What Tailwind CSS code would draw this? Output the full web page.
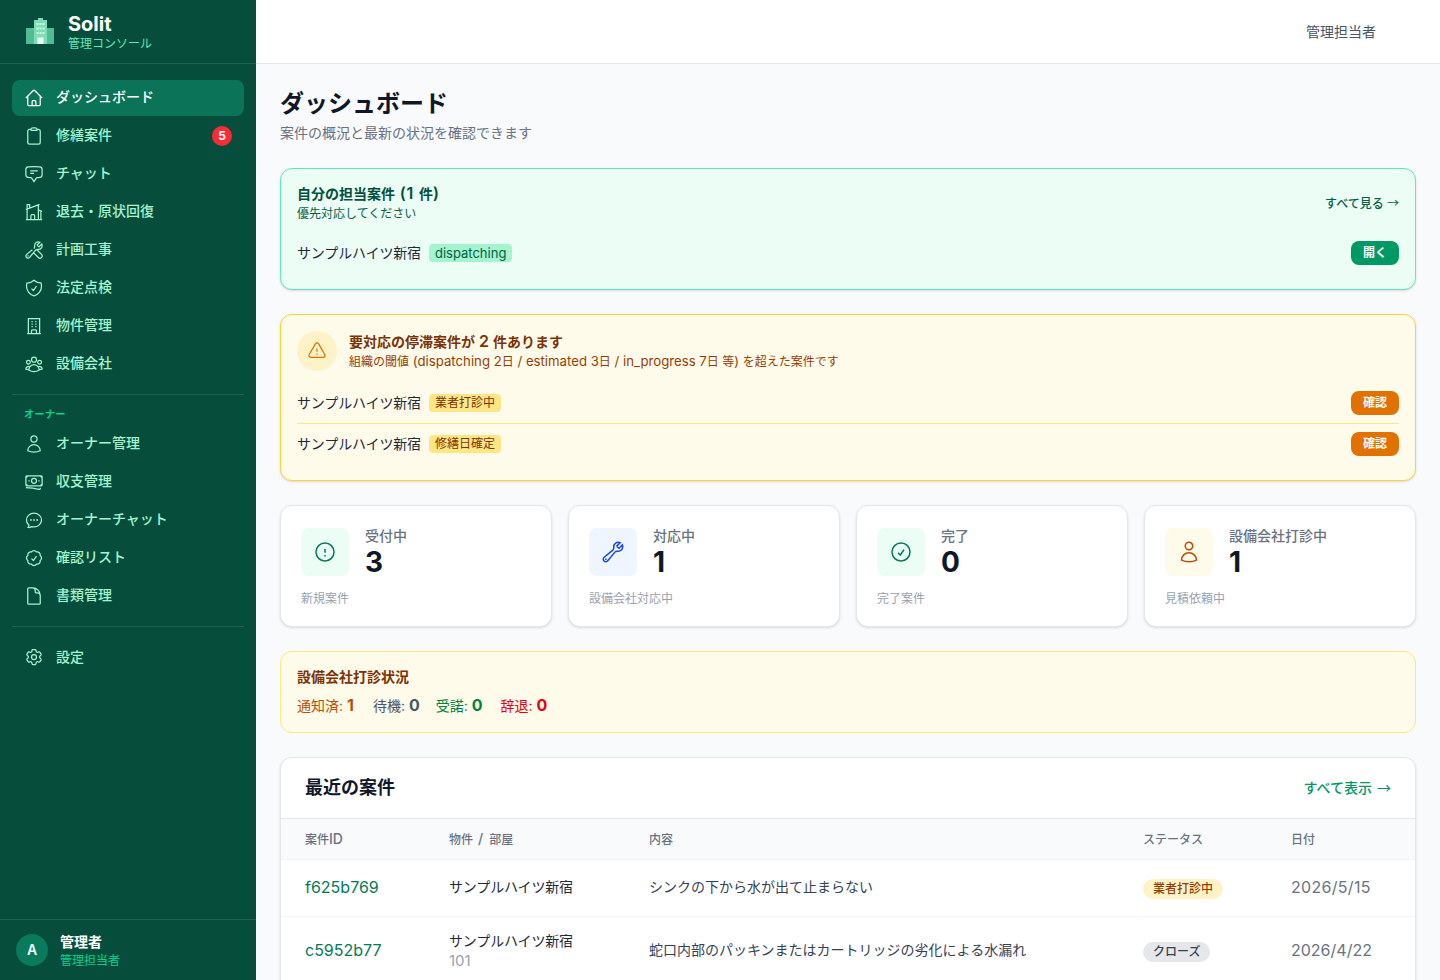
<!DOCTYPE html>
<html lang="ja">
<head>
<meta charset="utf-8">
<title>Solit</title>
<script src="https://cdn.jsdelivr.net/npm/@tailwindcss/browser@4"></script>
</head>
<body class="m-0 font-['Inter','Noto_Sans_CJK_JP',sans-serif]">
<svg class="hidden" xmlns="http://www.w3.org/2000/svg">
<symbol id="i-home" viewBox="0 0 24 24"><path d="M2.25 12l8.954-8.955c.44-.439 1.152-.439 1.591 0L21.75 12M4.5 9.75v10.125c0 .621.504 1.125 1.125 1.125H9.75v-4.875c0-.621.504-1.125 1.125-1.125h2.25c.621 0 1.125.504 1.125 1.125V21h4.125c.621 0 1.125-.504 1.125-1.125V9.75M8.25 21h8.25"/></symbol>
<symbol id="i-clip" viewBox="0 0 24 24"><path d="M15.666 3.888A2.25 2.25 0 0013.5 2.25h-3c-1.03 0-1.9.693-2.166 1.638m7.332 0c.055.194.084.4.084.612v0a.75.75 0 01-.75.75H9a.75.75 0 01-.75-.75v0c0-.212.03-.418.084-.612m7.332 0c.646.049 1.288.11 1.927.184 1.1.128 1.907 1.077 1.907 2.185V19.5a2.25 2.25 0 01-2.25 2.25H6.75A2.25 2.25 0 014.5 19.5V6.257c0-1.108.806-2.057 1.907-2.185a48.208 48.208 0 011.927-.184"/></symbol>
<symbol id="i-chat" viewBox="0 0 24 24"><path d="M7.5 8.25h9m-9 3H12m-9.75 1.51c0 1.6 1.123 2.994 2.707 3.227 1.129.166 2.27.293 3.423.379.35.026.67.21.865.501L12 21l2.755-4.133a1.14 1.14 0 01.865-.501 48.172 48.172 0 003.423-.379c1.584-.233 2.707-1.626 2.707-3.228V6.741c0-1.602-1.123-2.995-2.707-3.228A48.394 48.394 0 0012 3c-2.392 0-4.744.175-7.043.513C3.373 3.746 2.25 5.14 2.25 6.741v6.018z"/></symbol>
<symbol id="i-modern" viewBox="0 0 24 24"><path d="M8.25 21v-4.875c0-.621.504-1.125 1.125-1.125h2.25c.621 0 1.125.504 1.125 1.125V21m0 0h4.5V3.545M12.75 21h7.5V10.75M2.25 21h1.5m18 0h-18M2.25 9l4.5-1.636M18.75 3l-1.5.545m0 6.205l3 1m1.5.5l-1.5-.5M6.75 7.364V3h-3v18m3-13.636l10.5-3.819"/></symbol>
<symbol id="i-tools" viewBox="0 0 24 24"><path d="M11.42 15.17L17.25 21A2.652 2.652 0 0021 17.25l-5.877-5.877M11.42 15.17l2.496-3.03c.317-.384.74-.626 1.208-.766M11.42 15.17l-4.655 5.653a2.548 2.548 0 11-3.586-3.586l6.837-5.63m5.108-.233c.55-.164 1.163-.188 1.743-.14a4.5 4.5 0 004.486-6.336l-3.276 3.277a3.004 3.004 0 01-2.25-2.25l3.276-3.276a4.5 4.5 0 00-6.336 4.486c.091 1.076-.071 2.264-.904 2.95l-.102.085M4.867 19.125h.008v.008h-.008v-.008z"/></symbol>
<symbol id="i-shield" viewBox="0 0 24 24"><path d="M9 12.75L11.25 15 15 9.75m-3-7.036A11.959 11.959 0 013.598 6 11.99 11.99 0 003 9.749c0 5.592 3.824 10.29 9 11.623 5.176-1.332 9-6.03 9-11.622 0-1.31-.21-2.571-.598-3.751h-.152c-3.196 0-6.1-1.248-8.25-3.285z"/></symbol>
<symbol id="i-office" viewBox="0 0 24 24"><path d="M3.75 21h16.5M4.5 3h15M5.25 3v18m13.5-18v18M9 6.75h1.5m-1.5 3h1.5m-1.5 3h1.5m3-6H15m-1.5 3H15m-1.5 3H15M9 21v-3.375c0-.621.504-1.125 1.125-1.125h3.75c.621 0 1.125.504 1.125 1.125V21"/></symbol>
<symbol id="i-group" viewBox="0 0 24 24"><path d="M18 18.72a9.094 9.094 0 003.741-.479 3 3 0 00-4.682-2.72m.94 3.198l.001.031c0 .225-.012.447-.037.666A11.944 11.944 0 0112 21c-2.17 0-4.207-.576-5.963-1.584A6.062 6.062 0 016 18.719m12 0a5.971 5.971 0 00-.941-3.197m0 0A5.995 5.995 0 0012 12.75a5.995 5.995 0 00-5.058 2.772m0 0a3 3 0 00-4.681 2.72 8.986 8.986 0 003.74.477m.94-3.197a5.971 5.971 0 00-.94 3.197M15 6.75a3 3 0 11-6 0 3 3 0 016 0zm6 3a2.25 2.25 0 11-4.5 0 2.25 2.25 0 014.5 0zm-13.5 0a2.25 2.25 0 11-4.5 0 2.25 2.25 0 014.5 0z"/></symbol>
<symbol id="i-user" viewBox="0 0 24 24"><path d="M15.75 6a3.75 3.75 0 11-7.5 0 3.75 3.75 0 017.5 0zM4.501 20.118a7.5 7.5 0 0114.998 0A17.933 17.933 0 0112 21.75c-2.676 0-5.216-.584-7.499-1.632z"/></symbol>
<symbol id="i-notes" viewBox="0 0 24 24"><path d="M2.25 18.75a60.07 60.07 0 0115.797 2.101c.727.198 1.453-.342 1.453-1.096V18.75M3.75 4.5v.75A.75.75 0 013 6h-.75m0 0v-.375c0-.621.504-1.125 1.125-1.125H20.25M2.25 6v9m18-10.5v.75c0 .414.336.75.75.75h.75m-1.5-1.5h.375c.621 0 1.125.504 1.125 1.125v9.75c0 .621-.504 1.125-1.125 1.125h-.375m1.5-1.5H21a.75.75 0 00-.75.75v.75m0 0H3.75m0 0h-.375a1.125 1.125 0 01-1.125-1.125V15m1.5 1.5v-.75A.75.75 0 003 15h-.75M15 10.5a3 3 0 11-6 0 3 3 0 016 0zm3 0h.008v.008H18V10.5zm-12 0h.008v.008H6V10.5z"/></symbol>
<symbol id="i-oval" viewBox="0 0 24 24"><path d="M8.625 12a.375.375 0 11-.75 0 .375.375 0 01.75 0zm0 0H8.25m4.125 0a.375.375 0 11-.75 0 .375.375 0 01.75 0zm0 0H12m4.125 0a.375.375 0 11-.75 0 .375.375 0 01.75 0zm0 0h-.375M21 12c0 4.556-4.03 8.25-9 8.25a9.764 9.764 0 01-2.555-.337A5.972 5.972 0 015.41 20.97a5.969 5.969 0 01-.474-.065 4.48 4.48 0 00.978-2.025c.09-.457-.133-.901-.467-1.226C3.93 16.178 3 14.189 3 12c0-4.556 4.03-8.25 9-8.25s9 3.694 9 8.25z"/></symbol>
<symbol id="i-badge" viewBox="0 0 24 24"><path d="M9 12.75L11.25 15 15 9.75M21 12c0 1.268-.63 2.39-1.593 3.068a3.745 3.745 0 01-1.043 3.296 3.745 3.745 0 01-3.296 1.043A3.745 3.745 0 0112 21c-1.268 0-2.39-.63-3.068-1.593a3.746 3.746 0 01-3.296-1.043 3.745 3.745 0 01-1.043-3.296A3.745 3.745 0 013 12c0-1.268.63-2.39 1.593-3.068a3.745 3.745 0 011.043-3.296 3.746 3.746 0 013.296-1.043A3.746 3.746 0 0112 3c1.268 0 2.39.63 3.068 1.593a3.746 3.746 0 013.296 1.043 3.746 3.746 0 011.043 3.296A3.745 3.745 0 0121 12z"/></symbol>
<symbol id="i-doc" viewBox="0 0 24 24"><path d="M19.5 14.25v-2.625a3.375 3.375 0 00-3.375-3.375h-1.5A1.125 1.125 0 0113.5 7.125v-1.5a3.375 3.375 0 00-3.375-3.375H8.25m2.25 0H5.625c-.621 0-1.125.504-1.125 1.125v17.25c0 .621.504 1.125 1.125 1.125h12.75c.621 0 1.125-.504 1.125-1.125V11.25a9 9 0 00-9-9z"/></symbol>
<symbol id="i-cog" viewBox="0 0 24 24"><path d="M9.594 3.94c.09-.542.56-.94 1.11-.94h2.593c.55 0 1.02.398 1.11.94l.213 1.281c.063.374.313.686.645.87.074.04.147.083.22.127.324.196.72.257 1.075.124l1.217-.456a1.125 1.125 0 011.37.49l1.296 2.247a1.125 1.125 0 01-.26 1.431l-1.003.827c-.293.24-.438.613-.431.992a6.759 6.759 0 010 .255c-.007.378.138.75.43.99l1.005.828c.424.35.534.954.26 1.43l-1.298 2.247a1.125 1.125 0 01-1.369.491l-1.217-.456c-.355-.133-.75-.072-1.076.124a6.57 6.57 0 01-.22.128c-.331.183-.581.495-.644.869l-.213 1.28c-.09.543-.56.941-1.11.941h-2.594c-.55 0-1.02-.398-1.11-.94l-.213-1.281c-.062-.374-.312-.686-.644-.87a6.52 6.52 0 01-.22-.127c-.325-.196-.72-.257-1.076-.124l-1.217.456a1.125 1.125 0 01-1.369-.49l-1.297-2.247a1.125 1.125 0 01.26-1.431l1.004-.827c.292-.24.437-.613.43-.992a6.932 6.932 0 010-.255c.007-.378-.138-.75-.43-.99l-1.004-.828a1.125 1.125 0 01-.26-1.43l1.297-2.247a1.125 1.125 0 011.37-.491l1.216.456c.356.133.751.072 1.076-.124.072-.044.146-.087.22-.128.332-.183.582-.495.644-.869l.214-1.281z"/><path d="M15 12a3 3 0 11-6 0 3 3 0 016 0z"/></symbol>
<symbol id="i-warn" viewBox="0 0 24 24"><path d="M12 9v3.75m-9.303 3.376c-.866 1.5.217 3.374 1.948 3.374h14.71c1.73 0 2.813-1.874 1.948-3.374L13.949 3.378c-.866-1.5-3.032-1.5-3.898 0L2.697 16.126zM12 15.75h.007v.008H12v-.008z"/></symbol>
<symbol id="i-excl" viewBox="0 0 24 24"><path d="M12 9v3.75m9-.75a9 9 0 11-18 0 9 9 0 0118 0zm-9 3.75h.008v.008H12v-.008z"/></symbol>
<symbol id="i-wrench" viewBox="0 0 24 24"><path d="M21.75 6.75a4.5 4.5 0 01-4.884 4.484c-1.076-.091-2.264.071-2.95.904l-7.152 8.684a2.548 2.548 0 11-3.586-3.586l8.684-7.152c.833-.686.995-1.874.904-2.95a4.5 4.5 0 016.336-4.486l-3.276 3.276a3.004 3.004 0 002.25 2.25l3.276-3.276c.256.565.398 1.192.398 1.852z"/><path d="M4.867 19.125h.008v.008h-.008v-.008z"/></symbol>
<symbol id="i-check" viewBox="0 0 24 24"><path d="M9 12.75L11.25 15 15 9.75M21 12a9 9 0 11-18 0 9 9 0 0118 0z"/></symbol>
</svg>
<div class="flex h-[980px] w-[1440px] overflow-hidden bg-gray-50">
  <aside class="flex w-64 shrink-0 flex-col bg-[#064e3b]">
    <div class="flex h-16 shrink-0 items-center gap-3 border-b border-white/10 px-6">
      <svg class="size-8 shrink-0" viewBox="0 0 32 32"><rect x="2" y="12" width="28" height="16" fill="#52bd95"/><rect x="10" y="4" width="13" height="24" fill="#7fdcb8"/><rect x="14" y="2" width="5" height="2" fill="#7fdcb8"/><g fill="#d1fae5"><rect x="12.5" y="7" width="2" height="2"/><rect x="15.5" y="7" width="2" height="2"/><rect x="18.5" y="7" width="2" height="2"/><rect x="12.5" y="11.5" width="2" height="2"/><rect x="15.5" y="11.5" width="2" height="2"/><rect x="18.5" y="11.5" width="2" height="2"/><rect x="12.5" y="16" width="2" height="2"/><rect x="15.5" y="16" width="2" height="2"/><rect x="18.5" y="16" width="2" height="2"/></g><rect x="13.5" y="21.5" width="6" height="6.5" fill="#ecfdf5"/></svg>
      <div>
        <div class="text-xl leading-6 font-bold text-white">Solit</div>
        <div class="text-xs leading-4 text-emerald-300">管理コンソール</div>
      </div>
    </div>
    <nav class="flex flex-1 flex-col px-3 pt-4">
      <div class="flex flex-col gap-0.5">
        <a class="flex h-9 items-center gap-3 rounded-lg bg-[#0a7358] px-3 text-sm font-medium text-white"><svg class="size-5 shrink-0 fill-none stroke-current stroke-[1.5]"><use href="#i-home"/></svg><span class="mb-0.5">ダッシュボード</span></a>
        <a class="flex h-9 items-center gap-3 rounded-lg px-3 text-sm font-medium text-emerald-200"><svg class="size-5 shrink-0 fill-none stroke-current stroke-[1.5]"><use href="#i-clip"/></svg><span class="mb-0.5 flex-1">修繕案件</span><span class="flex size-5 items-center justify-center rounded-full bg-red-500 text-xs font-bold text-white">5</span></a>
        <a class="flex h-9 items-center gap-3 rounded-lg px-3 text-sm font-medium text-emerald-200"><svg class="size-5 shrink-0 fill-none stroke-current stroke-[1.5]"><use href="#i-chat"/></svg><span class="mb-0.5">チャット</span></a>
        <a class="flex h-9 items-center gap-3 rounded-lg px-3 text-sm font-medium text-emerald-200"><svg class="size-5 shrink-0 fill-none stroke-current stroke-[1.5]"><use href="#i-modern"/></svg><span class="mb-0.5">退去・原状回復</span></a>
        <a class="flex h-9 items-center gap-3 rounded-lg px-3 text-sm font-medium text-emerald-200"><svg class="size-5 shrink-0 fill-none stroke-current stroke-[1.5]"><use href="#i-tools"/></svg><span class="mb-0.5">計画工事</span></a>
        <a class="flex h-9 items-center gap-3 rounded-lg px-3 text-sm font-medium text-emerald-200"><svg class="size-5 shrink-0 fill-none stroke-current stroke-[1.5]"><use href="#i-shield"/></svg><span class="mb-0.5">法定点検</span></a>
        <a class="flex h-9 items-center gap-3 rounded-lg px-3 text-sm font-medium text-emerald-200"><svg class="size-5 shrink-0 fill-none stroke-current stroke-[1.5]"><use href="#i-office"/></svg><span class="mb-0.5">物件管理</span></a>
        <a class="flex h-9 items-center gap-3 rounded-lg px-3 text-sm font-medium text-emerald-200"><svg class="size-5 shrink-0 fill-none stroke-current stroke-[1.5]"><use href="#i-group"/></svg><span class="mb-0.5">設備会社</span></a>
      </div>
      <div class="mt-3 mb-[11px] border-t border-white/10"></div>
      <div class="mb-1 h-4 px-3 text-[10px] leading-4 font-semibold tracking-[0.5px] text-emerald-400">オーナー</div>
      <div class="flex flex-col gap-0.5">
        <a class="flex h-9 items-center gap-3 rounded-lg px-3 text-sm font-medium text-emerald-200"><svg class="size-5 shrink-0 fill-none stroke-current stroke-[1.5]"><use href="#i-user"/></svg><span class="mb-0.5">オーナー管理</span></a>
        <a class="flex h-9 items-center gap-3 rounded-lg px-3 text-sm font-medium text-emerald-200"><svg class="size-5 shrink-0 fill-none stroke-current stroke-[1.5]"><use href="#i-notes"/></svg><span class="mb-0.5">収支管理</span></a>
        <a class="flex h-9 items-center gap-3 rounded-lg px-3 text-sm font-medium text-emerald-200"><svg class="size-5 shrink-0 fill-none stroke-current stroke-[1.5]"><use href="#i-oval"/></svg><span class="mb-0.5">オーナーチャット</span></a>
        <a class="flex h-9 items-center gap-3 rounded-lg px-3 text-sm font-medium text-emerald-200"><svg class="size-5 shrink-0 fill-none stroke-current stroke-[1.5]"><use href="#i-badge"/></svg><span class="mb-0.5">確認リスト</span></a>
        <a class="flex h-9 items-center gap-3 rounded-lg px-3 text-sm font-medium text-emerald-200"><svg class="size-5 shrink-0 fill-none stroke-current stroke-[1.5]"><use href="#i-doc"/></svg><span class="mb-0.5">書類管理</span></a>
      </div>
      <div class="my-3 border-t border-white/10"></div>
      <a class="flex h-9 items-center gap-3 rounded-lg px-3 text-sm font-medium text-emerald-200"><svg class="size-5 shrink-0 fill-none stroke-current stroke-[1.5]"><use href="#i-cog"/></svg><span>設定</span></a>
    </nav>
    <div class="flex h-[61px] shrink-0 items-center gap-3 border-t border-white/10 px-4">
      <div class="flex size-8 items-center justify-center rounded-full bg-[#0a7a5c] text-sm font-semibold text-white">A</div>
      <div>
        <div class="text-sm leading-5 font-semibold text-white">管理者</div>
        <div class="mt-px text-xs leading-4 text-emerald-400">管理担当者</div>
      </div>
    </div>
  </aside>
  <div class="flex min-w-0 flex-1 flex-col">
    <header class="flex h-16 shrink-0 items-center justify-end border-b border-gray-200 bg-white pr-16">
      <span class="text-sm text-gray-600">管理担当者</span>
    </header>
    <main class="flex flex-col gap-6 px-6 pt-6">
      <div class="h-14">
        <h1 class="text-2xl leading-8 font-bold text-gray-900">ダッシュボード</h1>
        <p class="mt-[3px] text-sm leading-5 text-gray-500">案件の概況と最新の状況を確認できます</p>
      </div>
      <section class="h-[122px] rounded-xl border border-emerald-300 bg-emerald-50 px-4 pt-4 shadow-sm">
        <div class="flex items-center justify-between">
          <div>
            <div class="-mt-0.5 text-sm leading-5 font-semibold text-emerald-900">自分の担当案件<span class="text-base leading-5 tracking-[0.8px]"> (1 </span>件<span class="text-base leading-5">)</span></div>
            <div class="mt-[2px] text-xs leading-4 text-emerald-800">優先対応してください</div>
          </div>
          <a class="text-xs font-medium text-emerald-800">すべて見る <span class="font-['Noto_Sans_CJK_JP'] font-normal">→</span></a>
        </div>
        <div class="mt-[11px] flex h-[40px] items-center justify-between">
          <div class="flex items-center gap-2">
            <span class="text-sm tracking-[-0.15px] text-gray-800">サンプルハイツ新宿</span>
            <span class="rounded bg-emerald-200 px-1.5 text-[13px] leading-[18px] text-emerald-800">dispatching</span>
          </div>
          <a class="flex h-6 w-12 items-center justify-center rounded-lg bg-emerald-600 text-xs font-semibold text-white">開く</a>
        </div>
      </section>
      <section class="h-[167px] rounded-xl border border-amber-300 bg-amber-50 px-4 pt-4 shadow-sm">
        <div class="flex items-center gap-3">
          <div class="flex size-10 items-center justify-center rounded-full bg-amber-100 text-amber-600"><svg class="size-5 fill-none stroke-current stroke-[1.5]"><use href="#i-warn"/></svg></div>
          <div>
            <div class="-mt-px text-sm leading-5 font-semibold text-amber-900">要対応の停滞案件が<span class="text-base leading-5"> 2 </span>件あります</div>
            <div class="mt-px text-xs leading-4 text-amber-800">組織の閾値<span class="text-[13.2px] leading-4"> (dispatching 2</span>日<span class="text-[13.2px] leading-4"> / estimated 3</span>日<span class="text-[13.2px] leading-4"> / in_progress 7</span>日 等<span class="text-[13.2px] leading-4">) </span>を超えた案件です</div>
          </div>
        </div>
        <div class="mt-3">
          <div class="flex h-[41px] items-center justify-between border-b border-amber-200">
            <div class="flex items-center gap-2">
              <span class="text-sm tracking-[-0.15px] text-gray-800">サンプルハイツ新宿</span>
              <span class="rounded bg-amber-200 px-1.5 text-xs leading-[18px] text-amber-900">業者打診中</span>
            </div>
            <a class="flex h-6 w-12 items-center justify-center rounded-lg bg-amber-600 text-xs font-semibold text-white">確認</a>
          </div>
          <div class="flex h-[40px] items-center justify-between">
            <div class="flex items-center gap-2">
              <span class="text-sm tracking-[-0.15px] text-gray-800">サンプルハイツ新宿</span>
              <span class="rounded bg-amber-200 px-1.5 text-xs leading-[18px] text-amber-900">修繕日確定</span>
            </div>
            <a class="flex h-6 w-12 items-center justify-center rounded-lg bg-amber-600 text-xs font-semibold text-white">確認</a>
          </div>
        </div>
      </section>
      <section class="grid grid-cols-4 gap-4">
        <div class="h-[122px] rounded-xl border border-gray-200 bg-white px-5 pt-[22px] shadow-sm">
          <div class="flex gap-4">
            <div class="flex size-12 items-center justify-center rounded-lg bg-emerald-50 text-emerald-700"><svg class="size-6 fill-none stroke-current stroke-[1.5]"><use href="#i-excl"/></svg></div>
            <div><div class="text-sm leading-4 font-medium text-gray-500">受付中</div><div class="mt-1 text-[28px] leading-7 font-bold text-gray-900">3</div></div>
          </div>
          <div class="mt-[11px] text-xs leading-6 text-gray-400">新規案件</div>
        </div>
        <div class="h-[122px] rounded-xl border border-gray-200 bg-white px-5 pt-[22px] shadow-sm">
          <div class="flex gap-4">
            <div class="flex size-12 items-center justify-center rounded-lg bg-blue-50 text-blue-700"><svg class="size-6 fill-none stroke-current stroke-[1.5]"><use href="#i-wrench"/></svg></div>
            <div><div class="text-sm leading-4 font-medium text-gray-500">対応中</div><div class="mt-1 text-[28px] leading-7 font-bold text-gray-900">1</div></div>
          </div>
          <div class="mt-[11px] text-xs leading-6 text-gray-400">設備会社対応中</div>
        </div>
        <div class="h-[122px] rounded-xl border border-gray-200 bg-white px-5 pt-[22px] shadow-sm">
          <div class="flex gap-4">
            <div class="flex size-12 items-center justify-center rounded-lg bg-emerald-50 text-emerald-700"><svg class="size-6 fill-none stroke-current stroke-[1.5]"><use href="#i-check"/></svg></div>
            <div><div class="text-sm leading-4 font-medium text-gray-500">完了</div><div class="mt-1 text-[28px] leading-7 font-bold text-gray-900">0</div></div>
          </div>
          <div class="mt-[11px] text-xs leading-6 text-gray-400">完了案件</div>
        </div>
        <div class="h-[122px] rounded-xl border border-gray-200 bg-white px-5 pt-[22px] shadow-sm">
          <div class="flex gap-4">
            <div class="flex size-12 items-center justify-center rounded-lg bg-amber-50 text-amber-700"><svg class="size-6 fill-none stroke-current stroke-[1.5]"><use href="#i-user"/></svg></div>
            <div><div class="text-sm leading-4 font-medium text-gray-500">設備会社打診中</div><div class="mt-1 text-[28px] leading-7 font-bold text-gray-900">1</div></div>
          </div>
          <div class="mt-[11px] text-xs leading-6 text-gray-400">見積依頼中</div>
        </div>
      </section>
      <section class="h-[82px] rounded-xl border border-amber-200 bg-amber-50 px-4 pt-[15px]">
        <div class="text-sm leading-5 font-semibold text-amber-900">設備会社打診状況</div>
        <div class="mt-1.5 flex gap-4 text-sm leading-5">
          <span class="mr-[3px] text-amber-700">通知済: <b class="text-base font-bold">1</b></span>
          <span class="text-gray-600">待機: <b class="text-base font-bold">0</b></span>
          <span class="mr-0.5 text-green-700">受諾: <b class="text-base font-bold">0</b></span>
          <span class="text-red-600">辞退: <b class="text-base font-bold">0</b></span>
        </div>
      </section>
      <section class="h-[400px] overflow-hidden rounded-xl border border-gray-200 bg-white shadow-sm">
        <div class="flex h-[61px] items-center justify-between border-b border-gray-200 px-6">
          <h2 class="text-lg font-bold text-gray-900">最近の案件</h2>
          <a class="mb-0.5 text-sm font-medium text-emerald-600"><span class="mr-[5px]">すべて表示</span><span class="font-['Noto_Sans_CJK_JP'] font-normal">→</span></a>
        </div>
        <table class="w-full table-fixed border-collapse">
          <colgroup><col class="w-[168px]"><col class="w-[200px]"><col class="w-[494px]"><col class="w-[148px]"><col></colgroup>
          <thead>
            <tr class="h-10 border-b border-gray-100 bg-gray-50 text-left text-xs text-gray-500">
              <th class="pl-6 font-medium">案件<span class="text-sm">ID</span></th><th class="font-medium">物件<span class="text-sm tracking-[1.2px]"> / </span>部屋</th><th class="pt-0.5 font-medium">内容</th><th class="pt-0.5 font-medium">ステータス</th><th class="pt-0.5 font-medium">日付</th>
            </tr>
          </thead>
          <tbody class="text-sm text-gray-800">
            <tr class="h-[57px] border-b border-gray-100">
              <td class="pb-0.5 pl-6 text-base text-emerald-700">f625b769</td>
              <td class="pb-0.5 tracking-[-0.15px]">サンプルハイツ新宿</td>
              <td class="pb-0.5 text-gray-700">シンクの下から水が出て止まらない</td>
              <td class="pt-0.5"><span class="inline-block rounded-full bg-amber-100 px-2.5 text-xs leading-5 font-medium text-amber-800">業者打診中</span></td>
              <td class="pb-0.5 text-base tracking-[0.3px] text-gray-500">2026/5/15</td>
            </tr>
            <tr class="h-[68px] border-b border-gray-100">
              <td class="pl-6 text-base text-emerald-700">c5952b77</td>
              <td class="tracking-[-0.15px]"><div>サンプルハイツ新宿</div><div class="mt-[2px] text-[15px] leading-4 tracking-normal text-gray-400">101</div></td>
              <td class="text-gray-700">蛇口内部のパッキンまたはカートリッジの劣化による水漏れ</td>
              <td class="pt-0.5"><span class="inline-block rounded-full bg-gray-200 px-2.5 text-xs leading-5 font-medium text-gray-700">クローズ</span></td>
              <td class="text-base text-gray-500">2026/4/22</td>
            </tr>
          </tbody>
        </table>
      </section>
    </main>
  </div>
</div>
</body>
</html>
